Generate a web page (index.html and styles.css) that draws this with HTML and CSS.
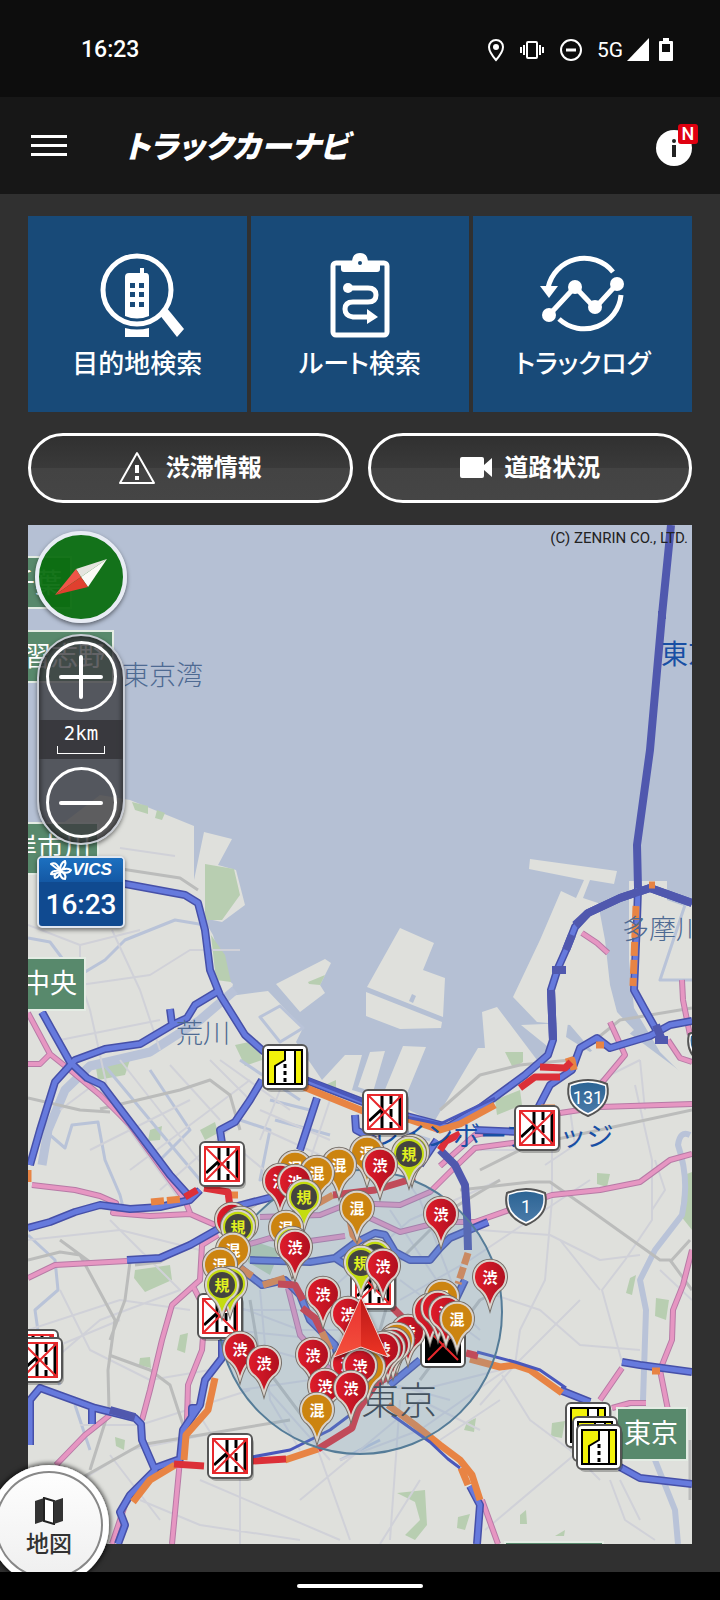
FILE: index.html
```
<!DOCTYPE html>
<html lang="ja">
<head>
    <meta charset="UTF-8">
    <meta name="viewport" content="width=device-width, initial-scale=1.0">
    <title>トラックカーナビ</title>
    <link rel="stylesheet" href="styles.css">
</head>
<body>
    <div class="status-bar">
        <span class="clock">16:23</span>
        <div class="status-icons">
            <svg width="18" height="24" viewBox="0 0 18 24"><path d="M9 2C5 2 2 5 2 9c0 5 7 13 7 13s7-8 7-13c0-4-3-7-7-7z" fill="none" stroke="#fff" stroke-width="2"/><circle cx="9" cy="9" r="3" fill="#fff"/></svg>
            <svg width="26" height="24" viewBox="0 0 26 24" fill="none" stroke="#fff" stroke-width="2"><rect x="8" y="4" width="10" height="16" rx="1"/><path d="M5 7v10M21 7v10M2 9v6M24 9v6"/></svg>
            <svg width="24" height="24" viewBox="0 0 24 24" fill="none" stroke="#fff" stroke-width="2"><circle cx="12" cy="12" r="10"/><path d="M7 12h10" stroke-width="3"/></svg>
            <span class="network">5G</span>
            <svg class="signal" width="22" height="24" viewBox="0 0 22 24"><path d="M22 0v23H0z" fill="#fff"/></svg>
            <svg width="14" height="24" viewBox="0 0 14 24"><path d="M4 0h6v3h3q1 0 1 1v18q0 1-1 1H1q-1 0-1-1V4q0-1 1-1h3zM3 6v8h8V6z" fill="#fff" fill-rule="evenodd"/></svg>
        </div>
    </div>

    <header class="app-bar">
        <button class="menu-button" aria-label="メニュー"><i></i><i></i><i></i></button>
        <h1>トラックカーナビ</h1>
        <button class="info-button" aria-label="お知らせ">
            <svg width="36" height="36" viewBox="0 0 36 36"><circle cx="18" cy="18" r="18" fill="#fff"/><circle cx="18" cy="11" r="2" fill="#222"/><path d="M16 15h4v12h-4z" fill="#222"/></svg>
            <span class="new-badge">N</span>
        </button>
    </header>

    <main>
        <nav class="tiles">
            <button class="tile">
                <svg width="88" height="88" viewBox="0 0 88 88">
                    <circle cx="44" cy="40" r="34" fill="none" stroke="#fff" stroke-width="5"/>
                    <path d="M32 27q0-4 4-4h11v-5h4v5h2q3 0 3 4v39q-12 5-24 0z" fill="#fff"/>
                    <path d="M32 78q12 3 24 0v9H32z" fill="#fff"/>
                    <path d="M37 33h5v5h-5zM46 33h5v5h-5zM37 42h5v5h-5zM46 42h5v5h-5zM37 52h5v5h-5zM46 52h5v5h-5z" fill="#184a78"/>
                    <path d="M66 64l7-7 18 22-7 8z" fill="#fff"/>
                </svg>
                <span>目的地検索</span>
            </button>
            <button class="tile">
                <svg width="88" height="88" viewBox="0 0 88 88">
                    <rect x="17" y="13" width="54" height="72" rx="3" fill="none" stroke="#fff" stroke-width="5"/>
                    <path d="M25 15v4q0 3 3 3h33q3 0 3-3v-6H52q0-10-8-10t-8 10H25z" fill="#fff"/>
                    <circle cx="44" cy="13" r="2" fill="#184a78"/>
                    <circle cx="32" cy="38" r="5" fill="#fff"/>
                    <path d="M32 38h20q8 0 8 7t-8 7H37q-8 0-8 7t8 8h15" fill="none" stroke="#fff" stroke-width="5"/>
                    <path d="M51 59l11 8-11 7z" fill="#fff"/>
                </svg>
                <span>ルート検索</span>
            </button>
            <button class="tile">
                <svg width="88" height="88" viewBox="0 0 88 88">
                    <path d="M74 22A37 37 0 0 0 9 38M82 45A37 37 0 0 1 20 69" fill="none" stroke="#fff" stroke-width="5"/>
                    <path d="M1 36h18L10 48z" fill="#fff"/>
                    <path d="M10 65l26-28 20 21 22-24" fill="none" stroke="#fff" stroke-width="5"/>
                    <g fill="#fff"><circle cx="10" cy="65" r="7"/><circle cx="36" cy="37" r="7"/><circle cx="56" cy="57" r="7"/><circle cx="78" cy="34" r="7"/></g>
                </svg>
                <span>トラックログ</span>
            </button>
        </nav>

        <div class="pills">
            <button class="pill">
                <svg width="36" height="34" viewBox="0 0 36 34"><path d="M18 2L35 32H1z" fill="none" stroke="#fff" stroke-width="2" stroke-linejoin="round"/><path d="M18 14v8M18 25v4" stroke="#fff" stroke-width="4"/></svg>
                <span>渋滞情報</span>
            </button>
            <button class="pill">
                <svg width="34" height="34" viewBox="0 0 34 34"><path d="M3 6h20q2 0 2 2v6l8-7v19l-8-7v6q0 2-2 2H3q-2 0-2-2V8q0-2 2-2z" fill="#fff"/></svg>
                <span>道路状況</span>
            </button>
        </div>

        <section class="map">
            <svg id="map" class="map-canvas" viewBox="28 525 664 1019">
                <defs>
                    <linearGradient id="jam"><stop offset="0" stop-color="#e01c2a"/><stop offset="1" stop-color="#b01020"/></linearGradient>
                    <linearGradient id="shield" x2="0" y2="1"><stop offset="0" stop-color="#2c6494"/><stop offset="1" stop-color="#4a7aa8"/></linearGradient>
                    <linearGradient id="arrow-left" x2="0" y2="1"><stop offset="0" stop-color="#e83030"/><stop offset="1" stop-color="#f4503c"/></linearGradient>
                    <linearGradient id="arrow-right" x2="0" y2="1"><stop offset="0" stop-color="#b81818"/><stop offset="1" stop-color="#ee3424"/></linearGradient>
                    <path id="pin" d="M0 30C-3 20-5 17-9 13A16 16 0 1 1 9 13C5 17 3 20 0 30z"/>
                    <g id="sign-closed">
                        <rect x="-20" y="-19" width="44" height="44" rx="6" fill="#000" opacity=".25"/>
                        <rect x="-22" y="-22" width="44" height="44" rx="5" fill="#fff" stroke="#555" stroke-width="2"/>
                        <path d="M-3-16v32M6-16v8M6-3v8M6 10v6M15-16v32M-16 9L-3-3" stroke="#000" stroke-width="3" fill="none"/>
                        <path d="M-17-17h34v34h-34zM-17-17l34 34M17-17l-34 34" stroke="#e8282c" stroke-width="2" fill="none"/>
                    </g>
                    <g id="sign-narrow">
                        <rect x="-20" y="-19" width="44" height="44" rx="6" fill="#000" opacity=".25"/>
                        <rect x="-22" y="-22" width="44" height="44" rx="5" fill="#fff" stroke="#555" stroke-width="2"/>
                        <path d="M-17-17h34v34h-34z" fill="#f2f20a"/>
                        <path d="M0-17h10v34h-20V-1l10-6z" fill="#fff"/>
                        <path d="M-17-17h34v34h-34zM0-17v10l-10 6v18M10-17v34" stroke="#000" stroke-width="2" fill="none"/>
                        <path d="M0-3v20" stroke="#000" stroke-width="3" stroke-dasharray="4 3"/>
                    </g>
                    <g id="shield-sign">
                        <path d="M-19-14Q0-22 19-14Q24 8 0 18Q-24 8-19-14z" fill="#fff" stroke="#555" stroke-width="2"/>
                        <path d="M-17-12Q0-19 17-12Q20 6 0 15Q-20 6-17-12z" fill="url(#shield)"/>
                    </g>
                    <g id="pink-roads">
                        <path d="M28 1013L50 1054 70 1070 100 1095 130 1125 170 1180 185 1200 190 1213M28 1064H40L50 1054"/>
                        <path d="M32 1185L75 1190 100 1196 116 1203 113 1213 150 1216 190 1214 222 1228M28 1278L55 1265 127 1261"/>
                        <path d="M218 1235L202 1245 200 1280 172 1305 162 1340 150 1390 142 1420M194 1288L205 1310 202 1350 188 1385 187 1420 180 1460 172 1544"/>
                        <path d="M56 1465L85 1435 110 1415M112 1544L125 1505M482 1500L498 1544"/>
                        <path d="M560 1113L600 1107 692 1104M600 1085L625 1055 610 1022M668 1040L680 1058 692 1062"/>
                        <path d="M692 1154L670 1160 640 1182 600 1190 552 1195 475 1222 440 1222 400 1232 370 1218"/>
                        <path d="M692 1250L683 1285 673 1310 672 1340 660 1370 668 1410M600 1400L622 1368M612 1408L630 1403H646"/>
                        <path d="M682 980L683 1000 690 1035M582 933L597 943 608 953"/>
                        <path d="M260 1217L320 1215 350 1203 400 1205 430 1192 450 1172 475 1148 520 1142M230 1250L270 1238 310 1241 345 1236M288 1288L300 1335 330 1370M440 1166L475 1135 500 1130"/>
                    </g>
                    <g id="blue-roads">
                        <path d="M120 883L185 895 198 903 205 930 210 970 220 995 245 1035 262 1050 300 1078 384 1110 448 1127 480 1108 525 1075 548 1055 553 1040 551 990 558 968 566 950 575 927 588 913 620 898 650 888 692 903"/>
                        <path d="M638 888L637 920 634 990 645 1010 662 1040M692 1021L670 1025 650 1036 610 1048 597 1038 580 1048 572 1070 550 1085 537 1110"/>
                        <path d="M220 990L195 1005 187 1018 172 1025 140 1044 105 1049 75 1060 55 1082 40 1130 30 1165M170 1009L172 1024"/>
                        <path d="M42 1012L52 1030 70 1062 87 1078 102 1085 140 1135 170 1175 188 1195"/>
                        <path d="M28 1228L50 1222 75 1212 100 1205 130 1209 160 1207 190 1200 200 1190M127 1260L160 1258 190 1245 220 1228 235 1215"/>
                        <path d="M262 1080L250 1100 235 1122 220 1130 223 1150M317 1098L300 1150M355 1115L356 1130 375 1140M230 1208L280 1195"/>
                        <path d="M250 1260L310 1262 335 1258 355 1243 375 1233 385 1235 395 1252 410 1260 430 1260 440 1248 450 1238 488 1222M335 1258L350 1268M475 1130L520 1132M437 1140L420 1165"/>
                        <path d="M240 1268L262 1285 285 1280 300 1295 310 1320 335 1345 342 1375"/>
                        <path d="M30 1445L30 1400 40 1388 95 1408 135 1418 141 1424 142 1440 155 1470 130 1495 120 1512 125 1525 118 1544M92 1408V1424"/>
                        <path d="M155 1468L180 1459 183 1430 200 1405 205 1380 222 1358V1340M192 1418V1408H200"/>
                        <path d="M622 1362L640 1365 692 1372M620 1467L640 1478 692 1484M560 1390L590 1402M465 1280L453 1305M420 1360L390 1385M470 1486L480 1505 477 1544"/>
                    </g>
                </defs>

                <rect x="28" y="525" width="664" height="1019" fill="#b5c0d4"/>

                <!-- land -->
                <g fill="#dfe0dc">
                    <path d="M28 850L100 795 130 800 194 826 194 880 204 832 232 839 218 865 236 870 245 905 222 922 203 918 213 935 226 978 233 984 230 996 268 991 303 1028 296 1042 322 1080 345 1055H362L352 1090 372 1096 388 1100 434 1122 478 1048H485L482 1012 497 1007 540 1064 552 1050 521 1025 568 1023 566 1037 590 1052 625 1030 692 1080V1544H28z"/>
                    <path d="M530 859L617 871 614 884 590 880 583 898 598 903 605 940 610 985 617 1012 634 1030 600 1060 570 1025 537 1022 513 997 540 940 561 891 576 898 584 880 529 869z"/>
                    <path d="M629 881H667V900L684 906 692 905V1084L660 1052 634 1008 629 960z"/>
                    <path d="M400 928L434 943 423 970 445 978 443 1017 367 987zM366 992L442 1022 441 1028 400 1029 366 1016z"/>
                    <path d="M276 984L325 959 331 963 320 985 325 993 300 1012zM370 1052L385 1051 373 1092 358 1087zM403 1046L426 1047 405 1098 384 1092z"/>
                </g>
                <path d="M409 1001L412 994 416 996 413 1003z" fill="#b5c0d4"/>

                <g fill="#b8ceb1">
                    <path d="M205 864L234 869 240 895 222 920 205 920zM132 802L148 806V814L135 810zM157 810L165 813 162 820 155 818zM211 935L225 955 231 982 216 980zM308 982L325 975 320 985 309 984z"/>
                    <path d="M505 1052H523V1062L513 1068zM495 1100L520 1090 522 1105 497 1115zM135 1270L170 1265 172 1280 145 1292 134 1278zM150 1130L162 1126 160 1140 148 1141zM200 1130L215 1122 218 1133 205 1140z"/>
                    <path d="M96 1068L130 1060 125 1075 98 1080zM180 1335L188 1333 185 1353 177 1350zM140 1358L150 1357 151 1368 139 1365zM115 1437L125 1440 124 1450 116 1446zM597 1173L610 1174 607 1187 597 1184zM656 1298L669 1300 666 1320 655 1316zM552 1423L565 1421 562 1438 551 1436zM250 1240L280 1250 270 1275 248 1262zM467 1422L476 1418 474 1432 464 1430zM684 1175L692 1172V1230L680 1215zM235 1045L258 1040 262 1060 245 1066zM325 1085L336 1080V1090zM630 1278L636 1275 632 1295 626 1293z"/>
                    <path d="M397 1493L425 1490 427 1525 415 1540 405 1535 420 1520 415 1502zM458 1517L470 1514 465 1530 457 1528zM520 1515L526 1510 527 1524 520 1524zM555 1536L565 1530 564 1536z"/>
                </g>

                <g class="river">
                    <path d="M235 990L200 1020 150 1052 90 1066 65 1090 48 1130 42 1165" stroke-width="9"/>
                    <path d="M690 1135Q680 1130 678 1145 690 1180 682 1215L655 1250 640 1280 646 1310 643 1400M655 1460L675 1510 678 1544" stroke-width="6"/>
                    <path d="M685 905L660 980H692M28 938L50 942 65 962M80 975L105 960 125 940 175 920 205 925M50 1135L65 1148 72 1125 98 1122 105 1160 120 1195 125 1215M100 1060L150 1120 200 1180M28 1235L55 1260 58 1290 35 1310 40 1345 60 1385M75 1405L90 1450M240 1120L270 1130 260 1180 310 1160"/>
                    <path d="M260 1017L280 1006 303 1028 280 1042zM270 1100L310 1110M275 1120L330 1135M240 1060L300 1100M150 1070L190 1130 160 1160M400 1130L430 1140M380 1440L340 1460"/>
                </g>

                <g class="minor">
                    <path d="M28 925L80 945 140 930M80 945V980L90 1010 110 1100M112 930L140 990 160 1050M80 985L150 975 190 950 240 950M120 848L175 856M60 1040L160 1020M60 1110L100 1080M90 1150L190 1100M120 1060L230 1200M130 1170L250 1080M160 1190L240 1120M100 1090L180 1200"/>
                    <path d="M28 1240L120 1230 200 1250M110 1220L180 1290 100 1320 30 1380M60 1290L90 1350 150 1380 210 1370M28 1330L120 1300 190 1310M50 1500L130 1450 230 1430M140 1500L200 1525 300 1540M110 1455L160 1520M60 1345L120 1320M80 1425L140 1425 250 1390M190 1400L240 1480 240 1544"/>
                    <path d="M260 1110L330 1140M265 1130L320 1155M240 1150L300 1200M210 1060L250 1100M170 1065L220 1120M220 1060L290 1110M280 1090L260 1140M330 1100L310 1160"/>
                    <path d="M220 1300L300 1330 390 1330M240 1390L310 1380 420 1390 500 1370M260 1290L270 1400 300 1450M350 1210L360 1300M390 1210L450 1300 480 1330M230 1330L330 1340M300 1400L350 1540M340 1460L420 1430 520 1360 580 1300M400 1300L470 1260 590 1180M400 1280L480 1340M300 1500L420 1400 480 1430M440 1440L500 1400"/>
                    <path d="M480 1230L550 1235 600 1260 640 1255M480 1290L540 1310 580 1345 640 1350M552 1150V1200L545 1280 520 1330 515 1365 480 1405M635 1085L652 1160V1220L625 1260 602 1290 622 1362M502 1375L530 1420 570 1450 600 1480M485 1530L580 1450 600 1410M610 1480L625 1520 655 1540M620 1480L640 1520M545 1165L575 1145 570 1110M600 1080L640 1060M655 1160L665 1190 652 1210M660 1270L692 1300M640 1060L645 1110M480 1150L560 1150M600 1290L560 1240"/>
                    <path d="M380 1140L420 1200 470 1330M330 1290L410 1220 500 1180M230 1310H350M270 1350L450 1400M250 1370L330 1460M400 1400L390 1540M200 1480L340 1540M420 1480L380 1544"/>
                </g>

                <g class="rail">
                    <path d="M28 1098L80 1110 110 1112M115 868L180 878 198 890M28 1260L60 1252 80 1255 115 1320 108 1370 109 1410 90 1470M60 1240L90 1262M130 1262L125 1300 110 1340M135 1265L160 1262 280 1190 340 1160"/>
                    <path d="M109 1355L150 1370 170 1385 183 1425M60 1490L140 1445 290 1420M100 1109L180 1090 210 1080 230 1095 240 1130"/>
                    <path d="M460 1190L530 1182 550 1182 590 1210 660 1260 670 1260 692 1290M690 1240L670 1262M480 1170L530 1145 692 1110M420 1380L480 1300 500 1290M440 1110L480 1075 520 1065 570 1060 620 1020 692 1008M690 1440V1500"/>
                    <path d="M500 1180L450 1210 400 1260 380 1330M320 1440L260 1360 250 1300"/>
                </g>

                <use href="#pink-roads" class="pink-casing"/>
                <use href="#pink-roads" class="pink"/>
                <use href="#blue-roads" class="blue-casing"/>
                <use href="#blue-roads" class="blue"/>
                <path class="deep" d="M671 525L662 615 650 750 637 845 638 888M575 925L588 913 620 898 650 888 692 903M551 990L553 1040M572 935L566 950M440 1150L455 1165 465 1185 467 1215 468 1250M656 1025L662 1040M110 1410L135 1417"/>
                <path class="deep" d="M552 970H566M655 1040H668M658 615H666"/>

                <g class="congestion">
                    <path d="M304 1087L368 1113M402 1117L440 1130 460 1124 495 1105M566 1062L572 1060 574 1070M649 885H655M596 1045H604M541 1108H555M240 1268L252 1276M263 1285L285 1278M350 1220L353 1235 360 1243M315 1205L333 1195M322 1332L330 1350M230 1195H238M652 1371H660M461 1468L468 1485"/>
                    <path d="M636 906L633 986" stroke-dasharray="14 4"/>
                    <path d="M151 1202L182 1199" stroke-dasharray="13 3"/>
                    <path d="M468 1253L458 1284" stroke-dasharray="12 3"/>
                    <path d="M133 1502L150 1480 175 1465M184 1460L186 1435 208 1410 215 1378M285 1460L318 1449M470 1359L500 1367 515 1365 530 1370 562 1393M388 1405L415 1425 440 1445 460 1460 472 1475 480 1500M28 1182V1170"/>
                    <path class="red" d="M540 1067L565 1068 571 1062M520 1088L535 1077 560 1077M333 1195L375 1190 415 1178M440 1150L446 1141 460 1134M278 1284L295 1285 303 1300M302 1308L315 1318 322 1332M185 1197L197 1190M204 1188L228 1192 230 1207M174 1464L204 1466M252 1461L286 1459M318 1449L352 1428 358 1410 375 1385 395 1372M466 1353L478 1356M385 1300L405 1320"/>
                </g>
                <path class="thin-blue" d="M305 1078L370 1104M477 1352L515 1362 540 1370 566 1388M392 1415L430 1442 448 1459 460 1468M252 1457L290 1450 330 1430 350 1415M372 1110L440 1124 495 1098"/>

                <circle cx="360" cy="1312" r="142" fill="#6f9bc0" fill-opacity=".25" stroke="#557c98" stroke-width="2"/>

                <g class="place">
                    <text x="122" y="685">東京湾</text>
                    <text x="176" y="1043">荒川</text>
                    <text x="622" y="939">多摩川</text>
                    <text class="route" x="661" y="664">東京</text>
                    <text class="route" x="372" y="1146">レインボーブリッジ</text>
                    <text class="city" x="361" y="1414">東京</text>
                </g>

                <g class="direction">
                    <path d="M20 557H71V608H20zM20 631H113V682H20zM20 823H98V874H20zM20 958H85V1010H20zM617 1408H687V1460H617zM505 1542H603V1560H505z"/>
                    <text x="62" y="593" text-anchor="end">千葉</text>
                    <text x="105" y="666" text-anchor="end">習志野</text>
                    <text x="91" y="857" text-anchor="end">岸市川</text>
                    <text x="77" y="993" text-anchor="end">中央</text>
                    <text x="624" y="1443">東京</text>
                </g>

                <g class="shield">
                    <use href="#shield-sign" x="588" y="1098"/><text x="588" y="1104">131</text>
                    <use href="#shield-sign" x="526" y="1207"/><text x="526" y="1213">1</text>
                    <use href="#shield-sign" x="708" y="1048"/>
                </g>

                <use href="#sign-closed" x="36" y="1352"/>
                <use href="#sign-closed" x="40" y="1360"/>
                <use href="#sign-closed" x="385" y="1112"/>
                <use href="#sign-closed" x="222" y="1164"/>
                <use href="#sign-closed" x="220" y="1316"/>
                <use href="#sign-closed" x="537" y="1128"/>
                <use href="#sign-closed" x="230" y="1456"/>
                <use href="#sign-closed" x="373" y="1287"/>
                <use href="#sign-narrow" x="285" y="1067"/>
                <use href="#sign-narrow" x="588" y="1425"/>
                <use href="#sign-narrow" x="595" y="1439"/>
                <use href="#sign-narrow" x="599" y="1447"/>
                <g transform="translate(443 1345)">
                    <rect x="-22" y="-22" width="44" height="44" rx="5" fill="#fff" stroke="#555" stroke-width="2"/>
                    <path d="M-18-18h36v36h-36z"/>
                    <path d="M-15-15l30 30M15-15l-30 30" stroke="#e8282c" stroke-width="2"/>
                </g>

                <g id="pins"></g>

                <g class="current-position">
                    <path d="M361 1297L334 1357 361 1347z" fill="url(#arrow-left)"/>
                    <path d="M361 1297L388 1357 361 1347z" fill="url(#arrow-right)"/>
                    <path d="M361 1297L334 1357 361 1347 388 1357z" fill="none" stroke="#f0d0cc" stroke-width="1"/>
                </g>

                <text class="copyright" x="688" y="543" text-anchor="end">(C) ZENRIN CO., LTD.</text>
            </svg>

            <div class="map-controls">
                <button class="compass" aria-label="方位">
                    <svg width="60" height="60" viewBox="0 0 60 60"><path d="M25 22L56 12 30 30z" fill="#e4e4de"/><path d="M56 12L37 40 30 30z" fill="#fafaf6"/><path d="M4 48L25 22 30 30z" fill="#ef5548"/><path d="M4 48L37 40 30 30z" fill="#e0402f"/></svg>
                </button>
                <div class="zoom">
                    <button class="zoom-button" aria-label="拡大"><svg width="44" height="44" viewBox="0 0 44 44"><path d="M22 2v40M2 22h40"/></svg></button>
                    <div class="scale">2km<i></i></div>
                    <button class="zoom-button" aria-label="縮小"><svg width="44" height="44" viewBox="0 0 44 44"><path d="M2 22h40"/></svg></button>
                </div>
                <div class="vics">
                    <div class="vics-logo">
                        <svg width="22" height="20" viewBox="0 0 22 20" fill="none" stroke="#fff" stroke-width="2"><path d="M10 11L1 4q6-3 9 7 0-8 5-10 2 5-5 10 6-4 11-1-3 5-11 1 7 3 5 8-5 0-5-8 0 6-5 7-2-3 5-7-4 4-9 3 1-4 9-3z"/></svg>VICS
                    </div>
                    <div class="vics-time">16:23</div>
                </div>
            </div>
        </section>

        <button class="map-button">
            <svg width="30" height="28" viewBox="0 0 30 28"><path d="M1 4l9-3v23l-9 3z" fill="#333"/><path d="M10 1l10 3v23l-10-3z" fill="#fff" stroke="#222" stroke-width="2"/><path d="M20 4l9-3v23l-9 3z" fill="#333"/></svg>
            <span>地図</span>
        </button>
    </main>

    <div class="gesture-bar"><i></i></div>

    <script src="pins.js"></script>
</body>
</html>
```
FILE: styles.css
```
* {
    box-sizing: border-box;
}
body {
    margin: 0;
    background-color: #303030;
    color: #fff;
    font-family: Roboto, "Noto Sans CJK JP", sans-serif;
}
button {
    margin: 0;
    padding: 0;
    border: none;
    background: none;
    color: inherit;
    font-family: inherit;
    cursor: pointer;
}
svg {
    display: block;
}

/* status bar */
.status-bar {
    height: 97px;
    padding: 2px 47px 0 81px;
    display: flex;
    align-items: center;
    justify-content: space-between;
    background-color: #0d0d0d;
}
.clock {
    font-size: 23px;
    font-weight: 500;
}
.status-icons {
    display: flex;
    align-items: center;
    gap: 14px;
}
.network {
    font-size: 21px;
    margin-right: -10px;
}
.signal {
    margin-right: -4px;
}

/* header */
.app-bar {
    height: 97px;
    padding: 0 28px 0 31px;
    display: flex;
    align-items: center;
    background-color: #171717;
}
.menu-button {
    width: 36px;
    display: flex;
    flex-direction: column;
    gap: 6px;
}
.menu-button i {
    height: 3px;
    background-color: #fff;
}
h1 {
    flex: 1;
    margin: 0 0 0 57px;
    font-family: "Noto Sans CJK JP", sans-serif;
    font-feature-settings: "palt";
    font-size: 31px;
    font-style: italic;
    font-weight: 900;
    line-height: 44px;
    padding-bottom: 2px;
}
.info-button {
    position: relative;
    margin-top: 4px;
}
.new-badge {
    position: absolute;
    top: -6px;
    right: -6px;
    width: 20px;
    height: 20px;
    border-radius: 3px;
    background-color: #e00010;
    font-size: 18px;
    font-weight: 500;
    line-height: 20px;
}

/* home */
main {
    position: relative;
    overflow: hidden;
    padding: 22px 28px 28px;
}
.tiles {
    display: grid;
    grid-template-columns: repeat(3, 1fr);
    gap: 4px;
}
.tile {
    padding: 34px 0 28px;
    display: flex;
    flex-direction: column;
    align-items: center;
    gap: 6px;
    background-color: #184a78;
    font-feature-settings: "palt";
    font-size: 26px;
    font-weight: 500;
    line-height: 40px;
}
.tile svg {
    overflow: visible;
}
.pills {
    display: grid;
    grid-template-columns: 1fr 1fr;
    gap: 15px;
    margin: 21px 0 22px;
}
.pill {
    height: 70px;
    display: flex;
    align-items: center;
    justify-content: center;
    gap: 11px;
    border: 3px solid #fff;
    border-radius: 35px;
    background: linear-gradient(#303030, #3a3a3a 50%, #434343 50%, #454545);
    font-size: 24px;
    font-weight: 700;
    line-height: 38px;
}

/* map */
.map {
    position: relative;
    overflow: hidden;
}
.map-canvas {
    width: 100%;
    height: auto;
    font-family: "Noto Sans CJK JP", sans-serif;
}
.river,
.minor,
.rail,
.pink,
.pink-casing,
.blue,
.blue-casing,
.deep,
.congestion,
.thin-blue {
    fill: none;
    stroke-linejoin: round;
}
.river {
    stroke: #b9c3d8;
    stroke-width: 3px;
}
.minor {
    stroke: #d0d1d8;
    stroke-width: 2px;
}
.rail {
    stroke: #bbbcbb;
    stroke-width: 3px;
}
.pink-casing {
    stroke: #b77aa6;
    stroke-width: 6px;
}
.pink {
    stroke: #e696c2;
    stroke-width: 4px;
}
.blue-casing {
    stroke: #4650a8;
    stroke-width: 8px;
}
.blue {
    stroke: #667add;
    stroke-width: 5px;
}
.deep {
    stroke: #5058ae;
    stroke-width: 8px;
}
.congestion {
    stroke: #e88444;
    stroke-width: 7px;
}
.red {
    stroke: #dc3038;
}
.thin-blue {
    stroke: #4a58bc;
    stroke-width: 3px;
}
.place {
    font-size: 27px;
    font-weight: 300;
    fill: #4e6a92;
}
.route {
    fill: #184fa4;
    font-weight: 400;
}
.city {
    font-size: 38px;
    fill: #44525f;
}
.direction path {
    fill: #58896c;
    stroke: #e4ece4;
    stroke-width: 2px;
}
.direction text {
    font-size: 27px;
    fill: #fff;
}
.shield text {
    font-family: Roboto, sans-serif;
    font-size: 18px;
    fill: #fff;
    text-anchor: middle;
}
.copyright {
    font-family: Roboto, sans-serif;
    font-size: 15px;
    fill: #222;
}
.pin text {
    font-size: 15px;
    font-weight: 700;
    fill: #fff;
    text-anchor: middle;
}
.pin-edge {
    stroke: #77706a;
    stroke-width: 4px;
}
.pin-body {
    stroke: #d9d3cc;
    stroke-width: 2px;
}
.pin-jam {
    fill: url(#jam);
}
.pin-slow {
    fill: #cc8410;
}
.pin-rule {
    fill: #c4dc10;
}
.pin-rule circle {
    fill: #444440;
}
.pin-rule text {
    fill: #e0f020;
}
.current-position {
    filter: drop-shadow(0 2px 2px rgba(0, 0, 0, 0.5));
}

/* map controls */
.map-controls {
    position: absolute;
    top: 6px;
    left: 7px;
    width: 92px;
    display: flex;
    flex-direction: column;
    align-items: center;
    gap: 11px;
}
.compass {
    width: 92px;
    height: 92px;
    display: grid;
    place-items: center;
    border: 4px solid #e8ecf4;
    border-radius: 50%;
    background-color: rgba(8, 108, 14, 0.94);
    box-shadow: 0 2px 4px rgba(0, 0, 0, 0.5);
}
.zoom {
    width: 88px;
    padding: 5px 0;
    display: flex;
    flex-direction: column;
    align-items: center;
    gap: 8px;
    border: 2px solid #c8ccd4;
    border-radius: 44px;
    background-color: rgba(60, 60, 64, 0.8);
    box-shadow: 0 2px 4px rgba(0, 0, 0, 0.5), inset 0 0 4px 2px rgba(0, 0, 0, 0.4);
}
.zoom-button {
    width: 71px;
    height: 71px;
    display: grid;
    place-items: center;
    border: 3px solid #fff;
    border-radius: 50%;
}
.zoom-button svg {
    stroke: #fff;
    stroke-width: 4px;
    stroke-linecap: round;
}
.scale {
    align-self: stretch;
    height: 39px;
    display: flex;
    flex-direction: column;
    align-items: center;
    background-color: rgba(50, 50, 54, 0.8);
    font-family: "DejaVu Sans Mono", monospace;
    font-size: 19px;
    line-height: 26px;
}
.scale i {
    width: 48px;
    height: 8px;
    border: 1px solid #fff;
    border-top: none;
}
.vics {
    width: 88px;
    border: 2px solid #dfe6f0;
    border-radius: 5px;
    background-color: #104a90;
    box-shadow: 0 2px 4px rgba(0, 0, 0, 0.5);
    overflow: hidden;
}
.vics-logo {
    height: 24px;
    display: flex;
    align-items: center;
    justify-content: center;
    background: linear-gradient(#1c70c0, #1458a4);
    font-family: "Liberation Sans", sans-serif;
    font-size: 17px;
    font-style: italic;
    font-weight: 700;
}
.vics-time {
    padding-top: 2px;
    font-size: 28px;
    font-weight: 500;
    line-height: 42px;
    text-align: center;
}
.map-button {
    position: absolute;
    left: -11px;
    bottom: -13px;
    width: 120px;
    height: 120px;
    display: flex;
    flex-direction: column;
    align-items: center;
    padding-top: 32px;
    border-radius: 50%;
    background: linear-gradient(#fff, #eee);
    box-shadow: inset 0 0 0 6px #fff, inset 0 0 0 8px #888, 0 0 4px 2px rgba(0, 0, 0, 0.6);
    color: #333;
    font-size: 23px;
    font-weight: 500;
    line-height: 40px;
}

.gesture-bar {
    height: 28px;
    display: grid;
    place-items: center;
    background-color: #000;
}
.gesture-bar i {
    width: 126px;
    height: 4px;
    border-radius: 2px;
    background-color: #fff;
}
```
FILE: pins.js
```
const labels = { jam: '渋', slow: '混', rule: '規' };

// type, x, y (back to front)
const pins = [
    ['slow', 295, 1168], ['slow', 367, 1153], ['slow', 339, 1165],
    ['jam', 280, 1181], ['slow', 317, 1173], ['jam', 295, 1182],
    ['rule', 412, 1152], ['rule', 409, 1154], ['jam', 380, 1165],
    ['rule', 304, 1197], ['slow', 357, 1208], ['jam', 441, 1214],
    ['slow', 286, 1228], ['rule', 292, 1244], ['jam', 295, 1247],
    ['rule', 375, 1257], ['rule', 361, 1263], ['jam', 383, 1266],
    ['jam', 232, 1220], ['rule', 241, 1224], ['rule', 238, 1227],
    ['slow', 233, 1250], ['slow', 220, 1265], ['rule', 230, 1284], ['rule', 222, 1285],
    ['jam', 490, 1277], ['jam', 323, 1294], ['jam', 348, 1314],
    ['jam', 240, 1349], ['jam', 264, 1363], ['jam', 313, 1355],
    ['jam', 408, 1332], ['slow', 397, 1340], ['jam', 393, 1345], ['jam', 388, 1348], ['jam', 383, 1349],
    ['slow', 368, 1367], ['jam', 348, 1364], ['jam', 360, 1366],
    ['jam', 325, 1386], ['jam', 351, 1388], ['slow', 317, 1410],
    ['slow', 442, 1297], ['jam', 430, 1311], ['jam', 438, 1308], ['jam', 446, 1313], ['slow', 457, 1319]
];

document.getElementById('pins').innerHTML = pins.map(([type, x, y]) => `
    <g class="pin pin-${type}" transform="translate(${x} ${y})">
        <use class="pin-edge" href="#pin"/>
        <use class="pin-body" href="#pin"/>
        ${type === 'rule' ? '<circle r="13"/>' : ''}
        <text y="6">${labels[type]}</text>
    </g>
`).join('');
```
